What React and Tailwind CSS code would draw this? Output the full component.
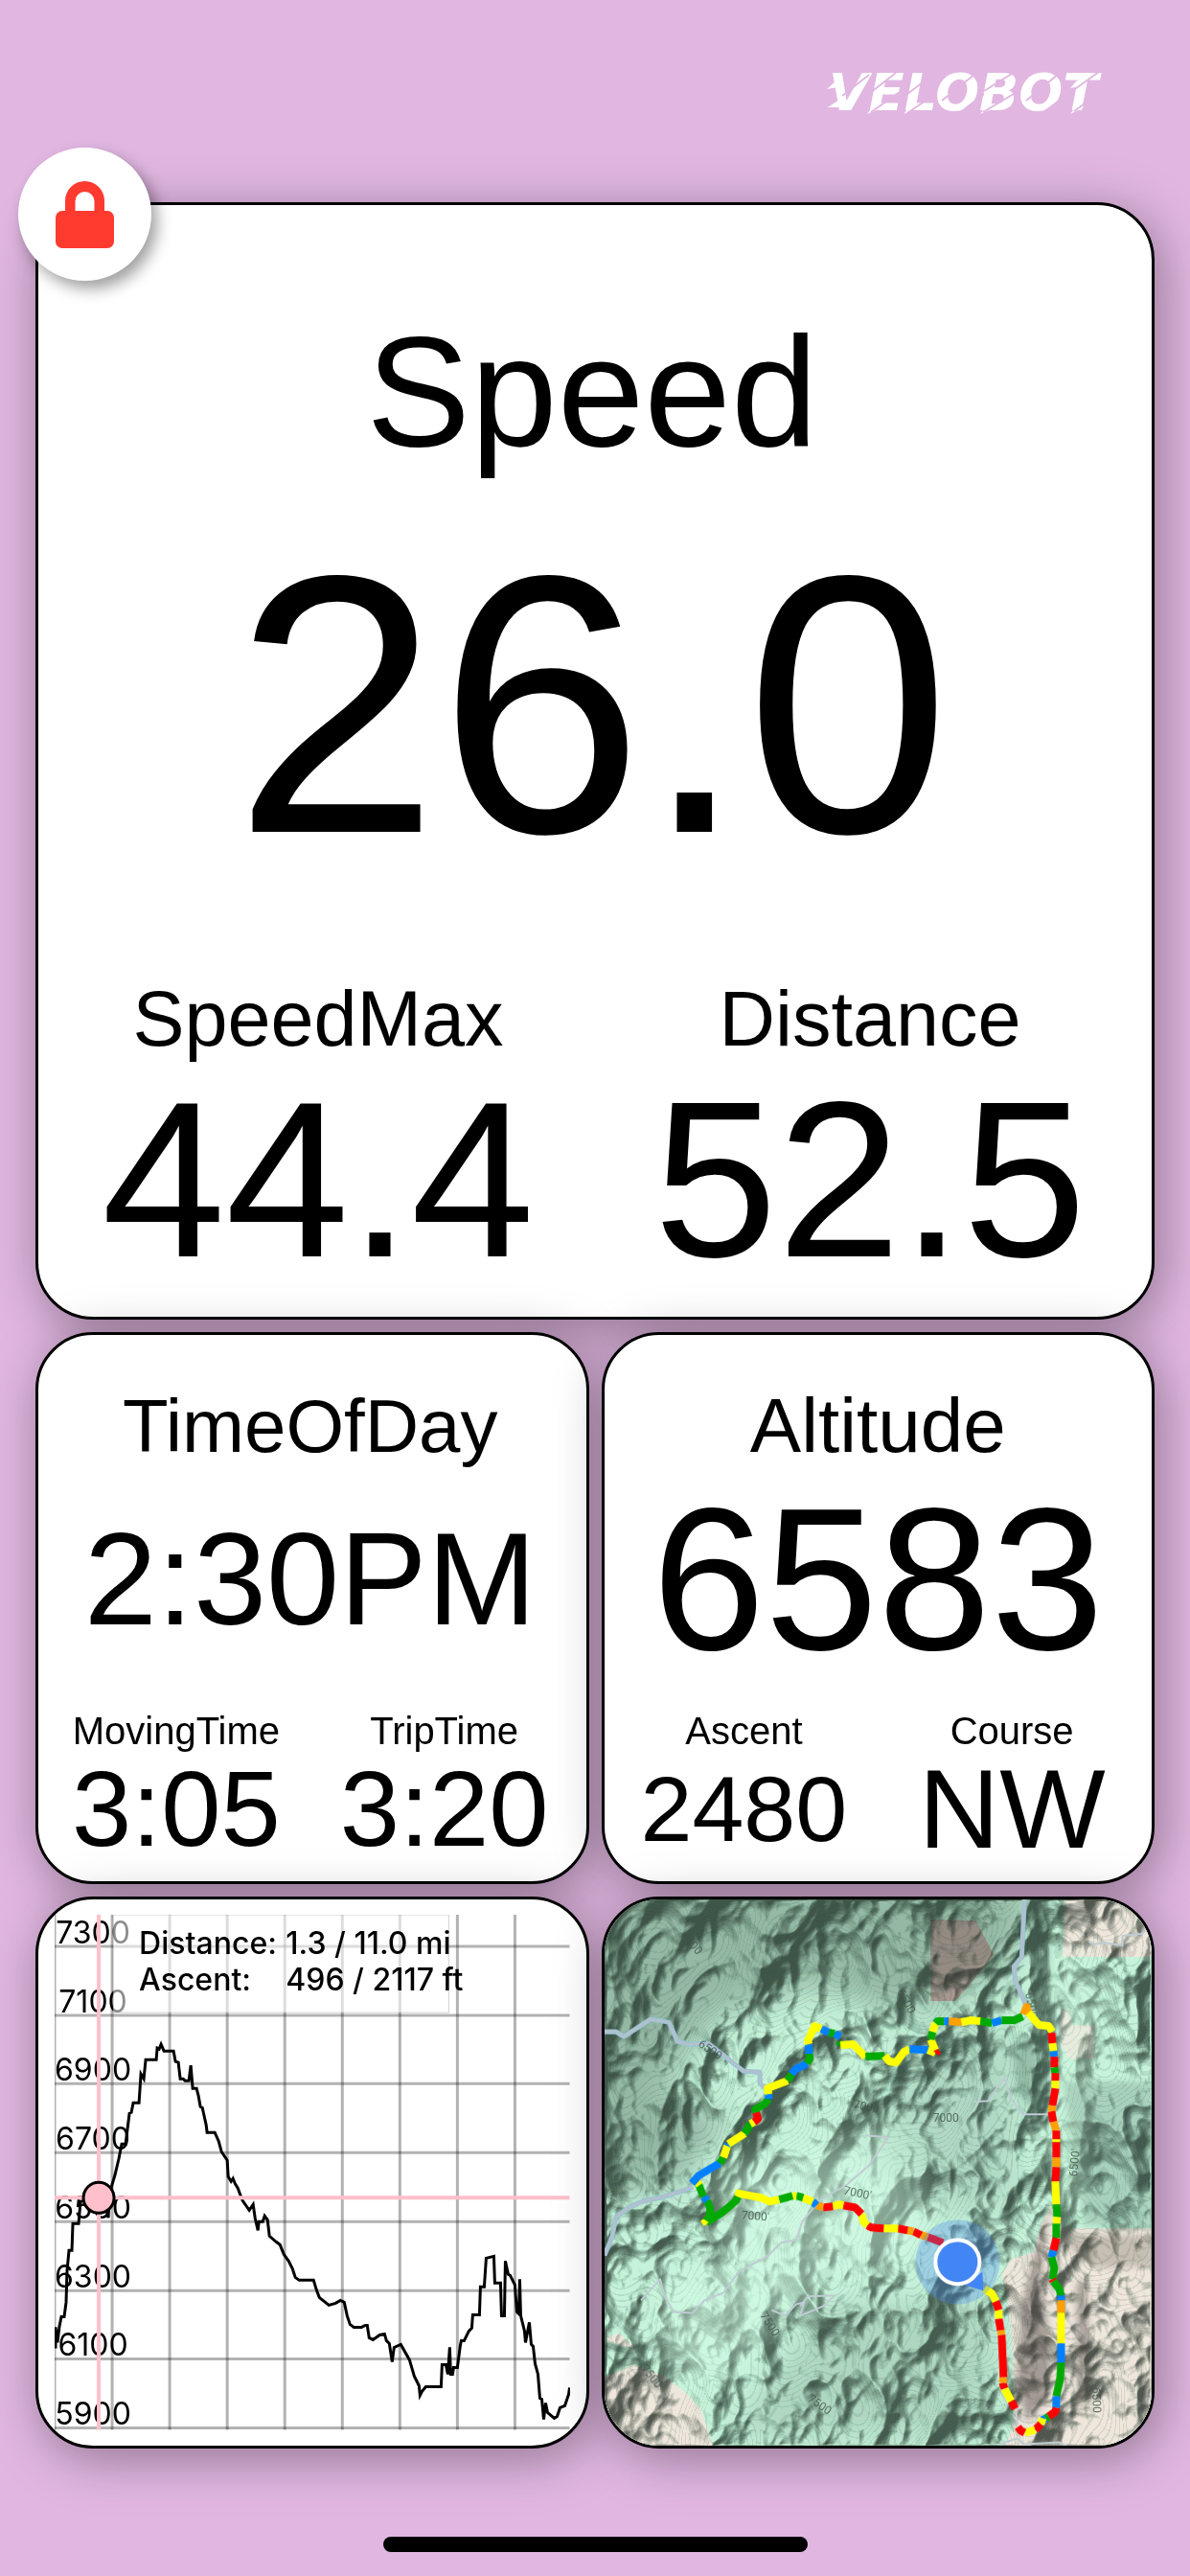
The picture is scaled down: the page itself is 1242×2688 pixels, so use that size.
const GRID_X = [0, 60, 120, 180, 240, 300, 360, 420, 480];

const ELEVATIONS = [
  { label: "7300", y: 33 },
  { label: "7100", y: 105 },
  { label: "6900", y: 176 },
  { label: "6700", y: 248 },
  { label: "6500", y: 320 },
  { label: "6300", y: 392 },
  { label: "6100", y: 463 },
  { label: "5900", y: 535 },
];

const PROFILE =
  "1,452 1,430 3,446 5,429 7,419 10,419 12,404 13,371 15,350 18,350 19,322 25,322 27,299 40,296 54,306 56,316 57,294 60,281 63,271 67,254 " +
  "70,239 74,239 78,207 80,206 82,196 88,196 90,166 93,171 95,151 106,151 107,139 109,140 111,135 114,142 124,142 126,153 " +
  "129,154 131,171 134,171 136,173 140,173 142,157 144,181 148,181 150,189 152,200 154,201 158,219 159,227 167,227 171,236 " +
  "174,247 180,256 181,273 184,278 186,275 188,280 191,285 194,293 196,298 203,308 207,302 209,316 212,329 213,320 217,320 " +
  "219,314 222,318 224,335 231,341 235,344 239,354 244,361 248,369 251,378 255,381 270,381 273,391 276,399 286,407 293,405 " +
  "298,402 302,404 305,418 308,427 312,430 320,430 324,428 326,428 328,441 332,443 339,438 344,437 346,444 349,447 352,466 " +
  "354,451 361,448 370,464 375,481 380,491 381,501 383,497 387,492 403,492 404,469 408,469 410,479 412,451 413,479 415,479 " +
  "416,472 420,472 423,449 424,444 427,444 432,434 435,431 436,417 443,417 444,388 448,388 450,358 458,356 459,384 465,384 " +
  "466,418 469,418 470,361 473,375 475,376 480,386 482,414 484,416 485,380 486,418 490,434 491,446 495,425 497,448 499,450 " +
  "501,468 504,479 506,504 508,505 510,526 512,509 514,519 521,525 524,523 527,514 532,512 536,500 537,493";

// grade colours along the track
const R = "#ff0000";
const O = "#ffa000";
const Y = "#ffff00";
const G = "#00aa00";
const B = "#0080ff";

const TRACK = [
  [R, "353,358 337,352"],
  [O, "337,352 330,350"],
  [R, "330,350 322,346"],
  [O, "322,346 316,345"],
  [R, "316,345 306,343"],
  [Y, "306,343 291,343"],
  [R, "291,343 278,342 274,340"],
  [Y, "274,340 270,336 268,328"],
  [R, "268,328 261,321 249,319"],
  [Y, "249,319 245,318 238,320"],
  [R, "238,320 228,321"],
  [O, "228,321 221,319"],
  [B, "221,319 217,315"],
  [Y, "217,315 207,311"],
  [G, "207,311 200,309"],
  [Y, "200,309 196,309"],
  [G, "196,309 182,313"],
  [Y, "182,313 172,315 163,311 136,306"],
  [G, "139,310 137,314 123,326 106,337"],
  [Y, "107,338 103,333"],
  [G, "106,335 110,329 110,322 107,314"],
  [B, "107,314 103,310"],
  [G, "103,310 98,297"],
  [Y, "99,298 96,294"],
  [B, "91,296 98,288 120,275"],
  [G, "120,275 124,269"],
  [Y, "124,269 128,257"],
  [B, "128,257 129,255"],
  [Y, "129,255 146,244"],
  [G, "146,244 152,234"],
  [Y, "152,234 156,232"],
  [R, "156,232 160,229 158,222"],
  [G, "158,222 157,219 167,213 171,208"],
  [B, "171,208 171,203"],
  [Y, "171,203 170,197 191,189"],
  [G, "191,189 195,182"],
  [B, "195,182 199,177 211,171"],
  [G, "211,171 214,166 213,161"],
  [B, "213,161 213,151"],
  [Y, "213,151 212,147 219,132 226,135"],
  [B, "226,135 234,139"],
  [G, "234,139 240,140"],
  [B, "240,140 246,143"],
  [G, "245,148 246,152"],
  [Y, "246,152 259,151 265,157 272,164"],
  [G, "272,164 292,163"],
  [Y, "292,163 297,169 304,170 312,159 318,156"],
  [B, "318,156 337,157"],
  [Y, "337,157 345,160"],
  [R, "345,160 348,157"],
  [Y, "345,157 340,146"],
  [G, "340,146 342,138"],
  [Y, "342,138 345,129"],
  [G, "345,129 347,127 354,127"],
  [B, "354,127 359,127"],
  [O, "359,127 372,128"],
  [Y, "372,128 382,126 392,127"],
  [G, "392,127 404,129"],
  [B, "404,129 414,126"],
  [G, "414,126 427,126 436,122"],
  [O, "437,120 440,112 442,118"],
  [Y, "442,118 453,131 463,132 467,138"],
  [R, "466,139 467,150"],
  [Y, "467,150 468,158"],
  [B, "468,158 469,164"],
  [R, "469,164 469,175"],
  [G, "469,175 470,181"],
  [R, "470,181 470,189"],
  [Y, "470,189 470,197"],
  [R, "470,197 467,215"],
  [O, "467,215 466,221"],
  [R, "466,221 468,232"],
  [O, "468,232 471,241"],
  [R, "471,241 471,250"],
  [Y, "471,250 471,253"],
  [R, "471,253 471,269"],
  [O, "471,269 471,279"],
  [R, "471,279 470,294"],
  [Y, "470,294 471,318"],
  [G, "471,318 472,331"],
  [Y, "472,331 471,338"],
  [G, "471,338 471,353"],
  [R, "471,353 468,366"],
  [B, "468,366 466,373"],
  [G, "466,373 469,384 467,396"],
  [R, "467,396 468,398"],
  [G, "468,398 474,406 476,413"],
  [B, "476,413 476,418"],
  [O, "476,418 476,431"],
  [Y, "476,431 476,463"],
  [B, "476,463 476,483"],
  [G, "476,483 475,500 471,518"],
  [B, "471,518 471,530"],
  [R, "471,530 470,534 463,539"],
  [G, "463,539 460,541"],
  [B, "460,541 456,543"],
  [Y, "457,541 455,547"],
  [R, "455,547 449,553"],
  [Y, "449,553 438,556"],
  [R, "438,556 434,554 431,550"],
  [R, "428,531 424,523"],
  [Y, "424,523 417,510"],
  [R, "417,510 415,504"],
  [O, "415,504 416,498"],
  [R, "416,498 414,454"],
  [O, "414,454 413,449"],
  [R, "413,449 411,437"],
  [Y, "411,437 411,428"],
  [R, "411,428 408,419"],
  [Y, "408,419 404,411 396,406"],
];

const ROADS = [
  "0,138 12,138 20,143 48,125 67,128 76,148 87,151 108,150 145,179 162,180 162,192 168,197",
  "438,0 436,40 435,60 427,70 428,84 440,112",
  "92,300 80,304 58,311 42,314 27,320 12,331 8,351 0,371",
];

const TRAILS = [
  "38,418 58,396 62,413 72,430 92,431 104,418 124,410 140,388 170,372 184,358 200,355 206,336 226,312 252,298 275,278 296,248 272,246",
  "174,428 188,434 200,422 208,420 204,434 228,424 240,413 212,414 204,424",
  "505,44 510,47 520,45 540,48 540,38 560,36 571,28",
  "384,211 400,210 408,198 417,186 424,208 436,224 466,224",
  "412,568 430,562 438,568 474,566 482,570",
  "429,534 431,548",
];

const CONTOUR_LABELS = [
  { text: "7000'", x: 157, y: 334, turn: 4 },
  { text: "7000'", x: 263, y: 310, turn: 12 },
  { text: "6500'", x: 494, y: 275, turn: -84 },
  { text: "6500", x: 311, y: 108, turn: 62 },
  { text: "7000", x: 272, y: 220, turn: 12 },
  { text: "7000", x: 356, y: 232, turn: 0 },
  { text: "7500", x: 88, y: 48, turn: 50 },
  { text: "6500", x: 108, y: 160, turn: 35 },
  { text: "6500", x: 441, y: 111, turn: 80 },
  { text: "7500", x: 169, y: 445, turn: 58 },
  { text: "7500", x: 46, y: 500, turn: 50 },
  { text: "7500", x: 222, y: 530, turn: 35 },
  { text: "6500", x: 509, y: 522, turn: 88 },
];

function Card({ className = "", children }) {
  return (
    <section
      className={`relative min-w-0 rounded-[60px] border-[3px] border-black bg-white shadow-[6px_10px_54px_rgba(0,0,0,0.36)] ${className}`}
    >
      {children}
    </section>
  );
}

function SmallStat({ label, value, size }) {
  return (
    <div className="min-w-0 text-center">
      <h3 className="text-[40px] leading-[48px]">{label}</h3>
      <p className={`mt-[2px] leading-[112px] ${size}`}>{value}</p>
    </div>
  );
}

function VelobotLogo() {
  return (
    <svg className="h-[72px] w-[300px]" viewBox="0 0 300 72" role="img" aria-label="Velobot">
      <text
        x="2"
        y="53"
        fill="#fff"
        fontFamily="DejaVu Sans, sans-serif"
        fontSize="54"
        fontWeight="700"
        fontStyle="italic"
      >
        VELOBOT
      </text>
      <path
        d="M0 31 10 22 11 29ZM1 50 13 42 15 50ZM42 57 51 45 58 50ZM80 57 90 45 96 50ZM117 40 125 30 127 38ZM160 57 167 48 174 51ZM205 42 213 32 214 40ZM254 30 261 22 264 28ZM254 57 263 46 268 50Z"
        fill="#fff"
      />
      <path
        d="M16 38 44 16M45 35 72 14M46 55 76 34M84 36 108 18M84 56 106 41M120 43 155 15M136 58 164 36M164 33 196 13M163 55 200 33M208 43 242 15M222 58 252 36M256 33 284 13M258 54 276 41"
        fill="none"
        stroke="#e1b7e1"
        strokeWidth="2"
      />
    </svg>
  );
}

function ElevationChart() {
  return (
    <svg className="block h-auto w-full" viewBox="0 0 537 537" role="img" aria-label="Elevation profile">
      <g stroke="#000" strokeOpacity="0.3" strokeWidth="3">
        {GRID_X.map((x) => (
          <line key={x} x1={x} x2={x} y1="0" y2="537" />
        ))}
        {ELEVATIONS.map((e) => (
          <line key={e.label} x1="0" x2="537" y1={e.y} y2={e.y} />
        ))}
      </g>
      <g fontFamily="Inter, sans-serif" fontSize="32" textAnchor="middle">
        {ELEVATIONS.map((e) => (
          <text key={e.label} x="40" y={e.y - 3}>
            {e.label}
          </text>
        ))}
      </g>
      <polyline points={PROFILE} fill="none" stroke="#000" strokeWidth="3" />

      {/* Current position */}
      <path d="M46 0V537M0 295H537" stroke="#ffc0cb" strokeWidth="4" />

      {/* Summary */}
      <rect x="61" y="0" width="350" height="102" fill="#fff" fillOpacity="0.55" stroke="#000" strokeOpacity="0.18" />
      <g fontFamily="Inter, sans-serif" fontSize="32" fontWeight="500">
        <text x="88" y="41">Distance:</text>
        <text x="241" y="41">1.3 / 11.0 mi</text>
        <text x="88" y="79">Ascent:</text>
        <text x="241" y="79">496 / 2117 ft</text>
      </g>
      <circle cx="46" cy="295" r="16" fill="#ffc0cb" stroke="#000" strokeWidth="3" />
    </svg>
  );
}

function RouteMap() {
  return (
    <svg
      className="block h-full w-full rounded-[57px]"
      viewBox="0 0 571 570"
      preserveAspectRatio="xMidYMid slice"
      role="img"
      aria-label="Route map"
    >
      <defs>
        <filter id="hills" x="0" y="0" width="100%" height="100%" colorInterpolationFilters="sRGB">
          <feTurbulence type="turbulence" baseFrequency="0.009 0.007" numOctaves="4" seed="4" />
          <feGaussianBlur stdDeviation="1.2" />
          <feDiffuseLighting surfaceScale="48" diffuseConstant="1.15" lightingColor="#fff">
            <feDistantLight azimuth="45" elevation="56" />
          </feDiffuseLighting>
          <feColorMatrix values=".66 0 0 0 .34  0 .64 0 0 .38  0 0 .65 0 .36  0 0 0 1 0" />
        </filter>
        <filter id="contours" x="0" y="0" width="100%" height="100%" colorInterpolationFilters="sRGB">
          <feTurbulence type="turbulence" baseFrequency="0.009 0.007" numOctaves="2" seed="4" />
          <feColorMatrix values="0 0 0 0 0.15  0 0 0 0 0.22  0 0 0 0 0.18  0 0 0 1 0" />
          <feComponentTransfer>
            <feFuncA
              type="discrete"
              tableValues="0 0 0 .3 0 0 0 .3 0 0 0 .3 0 0 0 .3 0 0 0 .3 0 0 0 .3 0 0 0 .3 0 0 0 .3 0 0 0 .3 0 0 0 .3 0 0 0 .3 0 0 0 .3 0 0 0 .3 0 0 0 .3 0 0 0 .3 0 0 0 .3 0 0 0 .3 0 0 0 .3 0 0 0 .3 0 0 0 .3"
            />
          </feComponentTransfer>
        </filter>
        <filter id="soft" x="-20%" y="-20%" width="140%" height="140%">
          <feGaussianBlur stdDeviation="16" />
        </filter>
        <filter id="edge">
          <feGaussianBlur stdDeviation="3" />
        </filter>
      </defs>

      {/* Land cover */}
      <rect width="571" height="570" fill="#c6f2da" />
      <g fill="#efe6dc">
        <path d="M480 0H571V60H478ZM475 115 484 115 488 131H510V166H484L475 150Z" />
        <path d="M479 343H571V570H418L427 545 425 465 420 415 414 392 424 375 447 368 455 340 466 318Z" />
        <path d="M0 498 31 485 62 497 81 511 100 531 113 570H0ZM0 458 15 452 32 468 12 464Z" />
      </g>
      <path d="M340 21 387 22 406 58 366 106 340 106Z" fill="#c4aca6" />

      {/* Relief */}
      <rect width="571" height="570" filter="url(#hills)" className="mix-blend-multiply" />
      <rect width="571" height="570" filter="url(#contours)" opacity="0.35" />
      <g filter="url(#soft)">
        <path d="M-20 -20H440V40L400 90 300 120 220 90 120 120 60 200 130 230 80 300 -20 310Z" fill="#33483d" opacity="0.34" />
        <path d="M350 110 430 150 430 320 350 330 260 260 300 200Z" fill="#33483d" opacity="0.14" />
        <path d="M110 285 300 240 340 330 320 380 220 400 120 500 60 490 60 400 130 370Z" fill="#d6ffe8" opacity="0.45" />
        <path d="M478 60H500V330H478Z" fill="#d0fbe3" opacity="0.6" />
        <path d="M230 420 410 420 400 560 130 560Z" fill="#4a6b5a" opacity="0.2" />
      </g>
      <g filter="url(#edge)">
        <path d="M446 0H462L464 120 452 112Z" fill="#3c5648" opacity="0.35" />
        <path d="M425 150 450 145 460 210 450 224 430 200Z" fill="#3c5648" opacity="0.3" />
        <path d="M462 320 455 400 466 470 462 520 440 545 430 500 436 420 446 380Z" fill="#4b423d" opacity="0.45" />
        <path d="M492 400 502 396 506 470 498 540 494 520Z" fill="#4b423d" opacity="0.4" />
        <path d="M476 350H571V382L520 384 496 376Z" fill="#4b423d" opacity="0.25" />
        <path d="M478 190H571V340H500Z" fill="#446052" opacity="0.22" />
      </g>

      {/* Roads and creeks */}
      <g fill="none" strokeLinejoin="round">
        {ROADS.map((points) => (
          <g key={points}>
            <polyline points={points} stroke="#93c6d6" strokeWidth="5" />
            <polyline points={points} stroke="#b4bfcd" strokeWidth="3" />
          </g>
        ))}
        {TRAILS.map((points) => (
          <polyline key={points} points={points} stroke="#bfccd3" strokeWidth="2" />
        ))}
      </g>

      <g fontFamily="Roboto, sans-serif" fontSize="12" fill="#42544b" textAnchor="middle" opacity="0.8">
        {CONTOUR_LABELS.map((c) => (
          <text key={`${c.x}-${c.y}`} x={c.x} y={c.y} transform={`rotate(${c.turn} ${c.x} ${c.y})`}>
            {c.text}
          </text>
        ))}
      </g>

      {/* Track */}
      <g fill="none" strokeWidth="8" strokeLinejoin="round">
        {TRACK.map(([color, points]) => (
          <polyline key={points} points={points} stroke={color} />
        ))}
      </g>

      {/* Rider */}
      <circle cx="368" cy="378" r="44" fill="#4285f4" fillOpacity="0.3" />
      <path d="M376 402 395 408 394 388Z" fill="#4285f4" />
      <circle cx="368" cy="378" r="23" fill="#4285f4" stroke="#fff" strokeWidth="4" />
    </svg>
  );
}

export default function App() {
  return (
    <div className="min-h-screen bg-[#e1b7e1] px-[37px] font-['Liberation_Sans',Arial,sans-serif] text-black">
      <header className="flex h-[211px] items-start justify-end pt-[62px] pr-[42px]">
        <VelobotLogo />
      </header>

      <main className="flex flex-col gap-[13px]">
        <Card className="pt-[105px] pr-[6px] pb-[27px]">
          <button
            type="button"
            aria-label="Unlock screen"
            className="absolute -top-[60px] -left-[21px] flex size-[139px] items-center justify-center rounded-full bg-white shadow-[6px_8px_16px_rgba(0,0,0,0.38)]"
          >
            <svg className="h-[70px] w-[61px]" viewBox="0 0 61 70" fill="#ff3b30">
              <path d="M10 31V20.500a20.500 20.500 0 0 1 41 0V31h3a7 7 0 0 1 7 7v25a7 7 0 0 1-7 7H7a7 7 0 0 1-7-7V38a7 7 0 0 1 7-7ZM20.500 31h20V21a10 10 0 0 0-20 0Z" />
            </svg>
          </button>

          <div className="text-center">
            <h1 className="text-[163px] leading-[180px]">Speed</h1>
            <p className="mt-[44px] text-[384px] leading-none">26.0</p>
          </div>
          <div className="mt-[90px] grid grid-cols-2 pl-1 text-center">
            <div>
              <h2 className="text-[81px] leading-[92px]">SpeedMax</h2>
              <p className="mt-[6px] text-[232px] leading-none">44.4</p>
            </div>
            <div>
              <h2 className="text-[81px] leading-[92px]">Distance</h2>
              <p className="mt-[6px] text-[232px] leading-none">52.5</p>
            </div>
          </div>
        </Card>

        <div className="grid grid-cols-2 gap-[13px]">
          <Card className="pt-[47px] pr-2 pb-[19px] pl-1">
            <div className="text-center">
              <h2 className="text-[78px] leading-[96px]">TimeOfDay</h2>
              <p className="mt-1 text-[137px] leading-[216px]">2:30PM</p>
            </div>
            <div className="mt-[26px] grid grid-cols-2">
              <SmallStat label="MovingTime" value="3:05" size="text-[112px]" />
              <SmallStat label="TripTime" value="3:20" size="text-[112px]" />
            </div>
          </Card>

          <Card className="px-[6px] pt-[47px] pb-[19px]">
            <div className="text-center">
              <h2 className="text-[80px] leading-[96px]">Altitude</h2>
              <p className="mt-1 text-[212px] leading-[216px]">6583</p>
            </div>
            <div className="mt-[26px] grid grid-cols-2">
              <SmallStat label="Ascent" value="2480" size="text-[97px]" />
              <SmallStat label="Course" value="NW" size="text-[117px]" />
            </div>
          </Card>
        </div>

        <div className="grid grid-cols-2 gap-[13px]">
          <Card className="px-[17px] py-4">
            <ElevationChart />
          </Card>
          <Card>
            <RouteMap />
          </Card>
        </div>
      </main>

      <footer className="flex justify-center pt-[92px] pb-[22px]">
        <div className="h-4 w-[443px] rounded-full bg-black" />
      </footer>
    </div>
  );
}
